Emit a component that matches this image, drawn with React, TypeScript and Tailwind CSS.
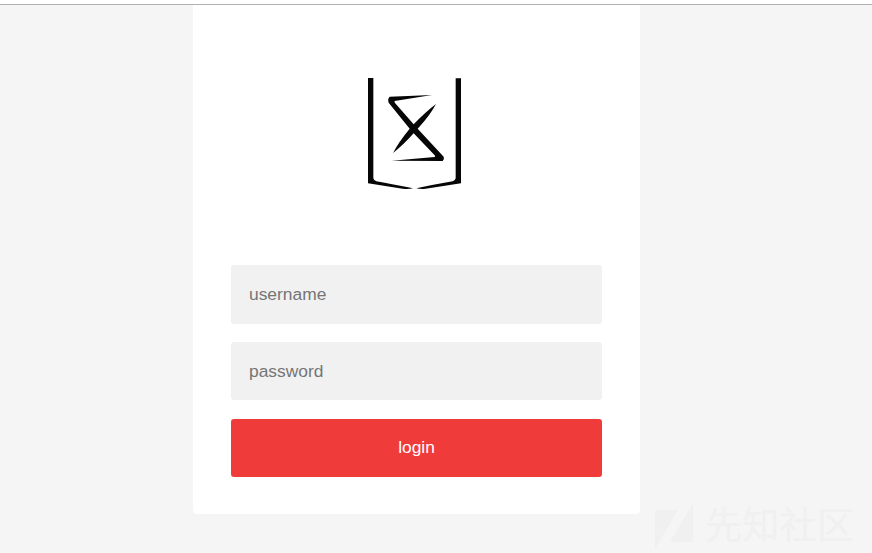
function Logo() {
  return (
    <svg width="120" height="125" viewBox="0 0 360 375" fill="#060606" aria-hidden="true">
      <path d="M39 24H55V325Q56 331 64 334Q112 343 174 355Q160 358 143 356L39 340Z" />
      <path d="M318 25H302V325Q301 331 293 334Q240 343 184 355Q199 358 212 356L318 340Z" />
      <path d="M104 80L231 75L119 93Q117 95 120 99L176 163Q210 127 243 102Q224 138 188 176L266 260Q269 268 263 273L110 272L239 261Q242 259 239 256L176 190Q143 227 114 249Q131 216 164 176L101 98Q97 86 104 80Z" />
    </svg>
  );
}

function Watermark() {
  return (
    <div className="absolute left-[654px] top-[501px] flex h-[50px] items-start gap-[11px] text-[#f0f0f0]">
      <svg className="mt-[2px]" width="40" height="46" viewBox="0 0 40 46" fill="currentColor" aria-hidden="true">
        <path d="M1 7H24L1 46Z" />
        <path d="M39 0V39H16Z" />
      </svg>
      <span className="mt-[4px] whitespace-nowrap font-['Noto_Sans_CJK_SC',sans-serif] text-[37.3px] font-normal leading-none">
        先知社区
      </span>
    </div>
  );
}

export default function App() {
  return (
    <div className="relative h-[553px] w-[872px] overflow-hidden bg-[#f5f5f5] font-['Liberation_Sans',Arial,sans-serif] text-[17.4px]">
      <div className="h-[5px] border-b border-[#b0b0b0] bg-white" />
      <form
        className="ml-[193px] flex h-[509px] w-[447px] flex-col rounded-b-[4px] bg-white px-[38px] pt-[65px]"
        onSubmit={(event) => event.preventDefault()}
      >
        <div className="mb-[70px] ml-[124px] h-[125px] w-[120px]">
          <Logo />
        </div>
        <input
          type="text"
          placeholder="username"
          className="mb-[18px] h-[59px] w-full shrink-0 rounded-[3px] bg-[#f1f1f1] px-[18px] outline-none placeholder:text-[#757575]"
        />
        <input
          type="password"
          placeholder="password"
          className="mb-[19px] h-[58px] w-full shrink-0 rounded-[3px] bg-[#f1f1f1] px-[18px] outline-none placeholder:text-[#757575]"
        />
        <button
          type="submit"
          className="h-[58px] w-full shrink-0 rounded-[3px] bg-[#f03b3b] pb-[2px] text-center text-white"
        >
          login
        </button>
      </form>
      <Watermark />
    </div>
  );
}
